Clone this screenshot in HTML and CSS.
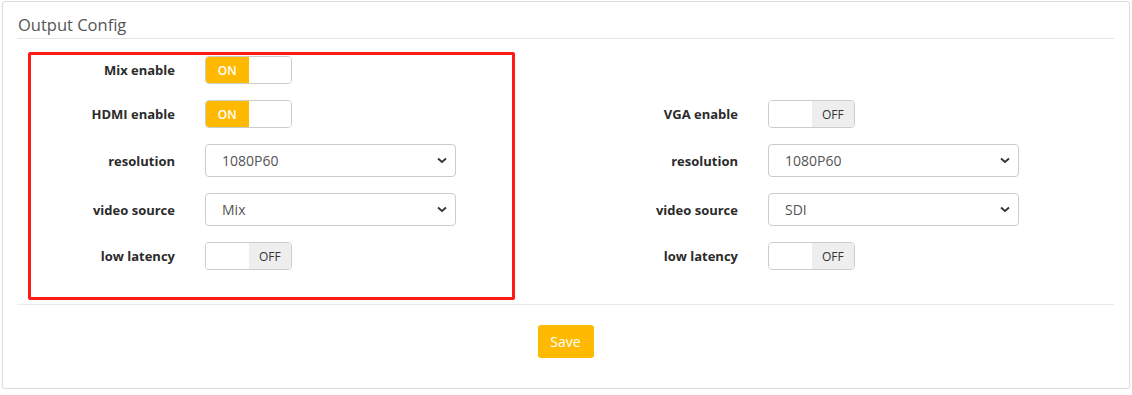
FILE: index.html
```html
<!DOCTYPE html>
<html lang="en">
<head>
  <meta charset="UTF-8" />
  <title>Output Config</title>
  <link rel="stylesheet" href="styles.css">
</head>
<body>
  <div class="panel">
    <h4 class="panel-title">Output Config</h4>

    <div class="form-grid">
      <div class="form-col">
        <div class="form-row">
          <label>Mix enable</label>
          <div class="switch on"><span class="sw-on">ON</span><span class="sw-blank"></span></div>
        </div>
        <div class="form-row">
          <label>HDMI enable</label>
          <div class="switch on"><span class="sw-on">ON</span><span class="sw-blank"></span></div>
        </div>
        <div class="form-row">
          <label>resolution</label>
          <div class="select-wrap">
            <select><option>1080P60</option></select>
            <svg class="chevron" width="10" height="7" viewBox="0 0 10 7"><path d="M1 1.5 L5 5 L9 1.5" fill="none" stroke="#333" stroke-width="1.8"/></svg>
          </div>
        </div>
        <div class="form-row">
          <label>video source</label>
          <div class="select-wrap">
            <select><option>Mix</option></select>
            <svg class="chevron" width="10" height="7" viewBox="0 0 10 7"><path d="M1 1.5 L5 5 L9 1.5" fill="none" stroke="#333" stroke-width="1.8"/></svg>
          </div>
        </div>
        <div class="form-row">
          <label>low latency</label>
          <div class="switch off"><span class="sw-blank"></span><span class="sw-off">OFF</span></div>
        </div>
      </div>

      <div class="form-col">
        <div class="form-row empty"></div>
        <div class="form-row">
          <label>VGA enable</label>
          <div class="switch off"><span class="sw-blank"></span><span class="sw-off">OFF</span></div>
        </div>
        <div class="form-row">
          <label>resolution</label>
          <div class="select-wrap">
            <select><option>1080P60</option></select>
            <svg class="chevron" width="10" height="7" viewBox="0 0 10 7"><path d="M1 1.5 L5 5 L9 1.5" fill="none" stroke="#333" stroke-width="1.8"/></svg>
          </div>
        </div>
        <div class="form-row">
          <label>video source</label>
          <div class="select-wrap">
            <select><option>SDI</option></select>
            <svg class="chevron" width="10" height="7" viewBox="0 0 10 7"><path d="M1 1.5 L5 5 L9 1.5" fill="none" stroke="#333" stroke-width="1.8"/></svg>
          </div>
        </div>
        <div class="form-row">
          <label>low latency</label>
          <div class="switch off"><span class="sw-blank"></span><span class="sw-off">OFF</span></div>
        </div>
      </div>
    </div>

    <div class="panel-footer">
      <button class="btn-save">Save</button>
    </div>

    <div class="highlight"></div>
  </div>
</body>
</html>
```

FILE: styles.css
```css
* {
  box-sizing: border-box;
}

body {
  margin: 0;
  padding: 1px 2px 0 2px;
  background-color: #ffffff;
  font-family: "Open Sans", "Noto Sans", Arial, sans-serif;
  color: #333;
}

.panel {
  position: relative;
  height: 388px;
  border: 1px solid #dcdcdc;
  border-radius: 3px;
  box-shadow: 0 1px 2px rgba(0, 0, 0, 0.06);
  padding: 0 15px 0 14px;
}

.panel-title {
  margin: 0;
  padding: 13px 0 0 1px;
  height: 37px;
  font-size: 16.5px;
  font-weight: normal;
  line-height: 20px;
  color: #555;
  border-bottom: 1px solid #e5e5e5;
}

.form-grid {
  display: grid;
  grid-template-columns: 563px 1fr;
  padding-top: 17px;
  padding-bottom: 34px;
  border-bottom: 1px solid #eaeaea;
}

.form-col {
  display: flex;
  flex-direction: column;
  gap: 16px;
}

.form-row {
  display: flex;
  align-items: center;
  gap: 30px;
}

.form-row.empty {
  height: 28px;
}

.form-row label {
  width: 158px;
  text-align: right;
  font-size: 13px;
  font-weight: bold;
  color: #2b2b2b;
}

.switch {
  display: flex;
  width: 87px;
  height: 28px;
  border: 1px solid #ccc;
  border-radius: 4px;
  overflow: hidden;
  font-size: 12px;
}

.switch span {
  width: 43px;
  display: flex;
  align-items: center;
  justify-content: center;
}

.sw-on {
  background-color: #ffb900;
  color: #fff;
  font-weight: 600;
}

.sw-off {
  background-color: #eeeeee;
  color: #333;
}

.sw-blank {
  background-color: #fff;
}

.select-wrap {
  position: relative;
  width: 251px;
  height: 33px;
}

.select-wrap select {
  appearance: none;
  -webkit-appearance: none;
  width: 100%;
  height: 100%;
  padding: 0 0 0 16px;
  border: 1px solid #ccc;
  border-radius: 4px;
  background-color: #fff;
  font-family: inherit;
  font-size: 14px;
  color: #555;
}

.chevron {
  position: absolute;
  right: 9px;
  top: 13px;
  pointer-events: none;
}

.panel-footer {
  display: flex;
  justify-content: center;
  padding-top: 20px;
}

.btn-save {
  width: 56px;
  height: 33px;
  border: none;
  border-radius: 3px;
  background-color: #ffb900;
  color: #fff;
  font-family: inherit;
  font-size: 14px;
  cursor: pointer;
}

.highlight {
  position: absolute;
  left: 25px;
  top: 50px;
  width: 487px;
  height: 248px;
  border: 3px solid #ff1a1a;
  border-radius: 2px;
  pointer-events: none;
}
```
